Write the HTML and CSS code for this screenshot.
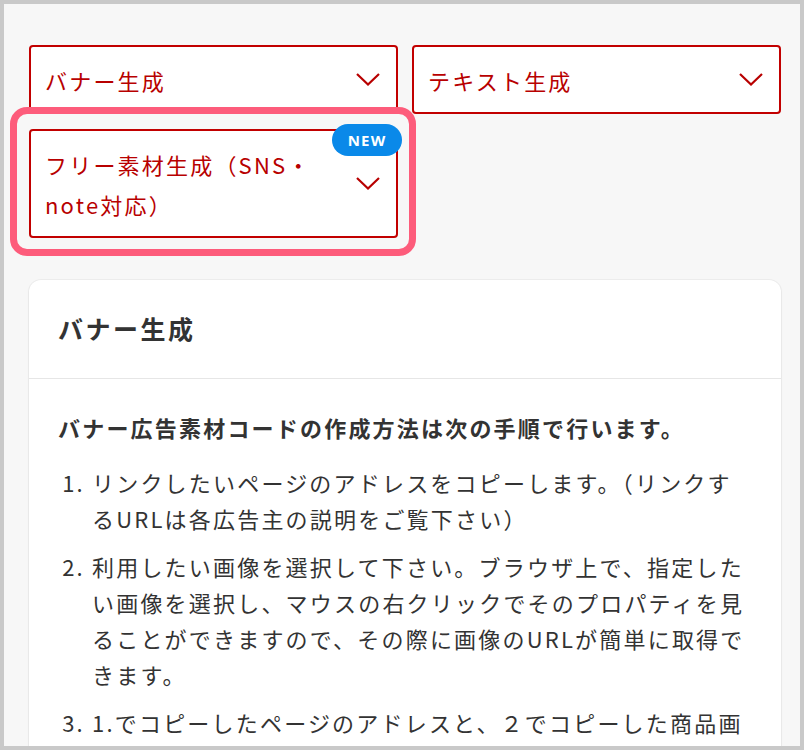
FILE: index.html
```html
<!DOCTYPE html>
<html lang="ja">
<head>
    <meta charset="UTF-8">
    <meta name="viewport" content="width=device-width, initial-scale=1.0">
    <title>広告素材 - バナー生成</title>
    <link rel="stylesheet" href="styles.css">
</head>
<body>
    <div class="frame">
        <div class="page">
            <!-- Category menu -->
            <div class="menu">
                <div class="dropdown">
                    <span class="dropdown-label">バナー生成</span>
                    <svg class="chevron" viewBox="0 0 24 13" width="24" height="13"><path d="M1 1l11 10.5L23 1"/></svg>
                </div>
                <div class="dropdown">
                    <span class="dropdown-label">テキスト生成</span>
                    <svg class="chevron" viewBox="0 0 24 13" width="24" height="13"><path d="M1 1l11 10.5L23 1"/></svg>
                </div>
                <div class="dropdown highlight">
                    <span class="dropdown-label">フリー素材生成（SNS・note対応）</span>
                    <svg class="chevron" viewBox="0 0 24 13" width="24" height="13"><path d="M1 1l11 10.5L23 1"/></svg>
                    <span class="badge">NEW</span>
                </div>
            </div>

            <!-- Banner section -->
            <section class="card">
                <h2 class="card-title">バナー生成</h2>
                <div class="card-body">
                    <p class="lead">バナー広告素材コードの作成方法は次の手順で行います。</p>
                    <ol class="steps">
                        <li>リンクしたいページのアドレスをコピーします。（リンクするURLは各広告主の説明をご覧下さい）</li>
                        <li>利用したい画像を選択して下さい。ブラウザ上で、指定したい画像を選択し、マウスの右クリックでそのプロパティを見ることができますので、その際に画像のURLが簡単に取得できます。</li>
                        <li>1.でコピーしたページのアドレスと、２でコピーした商品画像のURLを下のフォームに入力して下さい。</li>
                    </ol>
                </div>
            </section>
        </div>
    </div>
</body>
</html>
```

FILE: styles.css
```css
* {
    margin: 0;
    padding: 0;
    box-sizing: border-box;
}

body {
    font-family: 'Noto Sans CJK JP', 'Noto Sans', sans-serif;
    color: #333;
    background: #f7f7f7;
}

.frame {
    height: 750px;
    border: 4px solid #c9c9c9;
    background: #f7f7f7;
    overflow: hidden;
}

.page {
    padding: 41px 19px 0 25px;
}

.menu {
    display: grid;
    grid-template-columns: 1fr 1fr;
    column-gap: 14px;
    row-gap: 15px;
}

.dropdown {
    position: relative;
    display: flex;
    align-items: center;
    justify-content: space-between;
    background: #fff;
    border: 2px solid #c20000;
    border-radius: 4px;
    padding: 12.5px 16px 12.5px 14px;
    color: #b80000;
    font-size: 22px;
    line-height: 40px;
    letter-spacing: 0.1em;
}

.dropdown-label {
    flex: 1;
    max-width: 275px;
}

.chevron {
    flex-shrink: 0;
    fill: none;
    stroke: #b80000;
    stroke-width: 2.2;
}

/* pink annotation frame around the new item */
.highlight::after {
    content: '';
    position: absolute;
    top: -24px;
    left: -21px;
    right: -20px;
    bottom: -20px;
    border: 7px solid #fd5c7b;
    border-radius: 17px;
    pointer-events: none;
}

.badge {
    position: absolute;
    top: -7px;
    right: -6px;
    width: 70px;
    height: 32px;
    border-radius: 16px;
    background: #0a89e9;
    color: #fff;
    font-family: 'Noto Sans', sans-serif;
    font-size: 15px;
    font-weight: bold;
    line-height: 32px;
    letter-spacing: 0.08em;
    text-align: center;
    z-index: 1;
}

.card {
    margin-top: 42px;
    background: #fff;
    border-radius: 12px;
    box-shadow: 0 0 0 1px rgba(0, 0, 0, 0.04), 0 1px 3px rgba(0, 0, 0, 0.05);
}

.card-title {
    padding: 30px 29px 31px;
    border-bottom: 1px solid #e6e6e6;
    font-size: 25px;
    font-weight: bold;
    line-height: 37px;
    letter-spacing: 0.1em;
}

.card-body {
    padding: 30px 29px 30px;
    font-size: 22px;
    line-height: 36px;
    letter-spacing: 0.1em;
}

.lead {
    font-weight: bold;
    margin-bottom: 19px;
}

.steps {
    padding-left: 34px;
}

.steps li {
    margin-bottom: 12px;
}
```
